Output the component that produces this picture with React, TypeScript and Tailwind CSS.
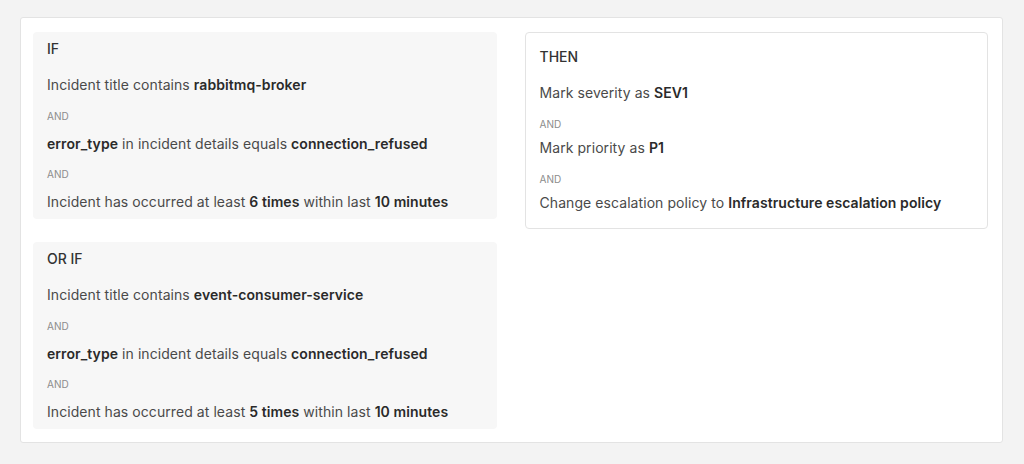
import React from 'react';

type Part = { t: string; b?: boolean };

const ifRules: Part[][] = [
  [{ t: 'Incident title contains ' }, { t: 'rabbitmq-broker', b: true }],
  [{ t: 'error_type', b: true }, { t: ' in incident details equals ' }, { t: 'connection_refused', b: true }],
  [{ t: 'Incident has occurred at least ' }, { t: '6 times', b: true }, { t: ' within last ' }, { t: '10 minutes', b: true }],
];

const orIfRules: Part[][] = [
  [{ t: 'Incident title contains ' }, { t: 'event-consumer-service', b: true }],
  [{ t: 'error_type', b: true }, { t: ' in incident details equals ' }, { t: 'connection_refused', b: true }],
  [{ t: 'Incident has occurred at least ' }, { t: '5 times', b: true }, { t: ' within last ' }, { t: '10 minutes', b: true }],
];

const thenRules: Part[][] = [
  [{ t: 'Mark severity as ' }, { t: 'SEV1', b: true }],
  [{ t: 'Mark priority as ' }, { t: 'P1', b: true }],
  [{ t: 'Change escalation policy to ' }, { t: 'Infrastructure escalation policy', b: true }],
];

const Line = ({ parts }: { parts: Part[] }) => (
  <div className="text-[14px] leading-[20px] tracking-[0.005em] text-[#4a4a4a] whitespace-nowrap">
    {parts.map((p, i) =>
      p.b ? (
        <span key={i} className="font-semibold text-[#2a2a2a]">{p.t}</span>
      ) : (
        <span key={i}>{p.t}</span>
      )
    )}
  </div>
);

const RuleList = ({ rules, andClass }: { rules: Part[][]; andClass: string }) => (
  <div className="flex flex-col">
    {rules.map((r, i) => (
      <React.Fragment key={i}>
        {i > 0 && (
          <div className={`text-[10px] leading-[14px] text-[#8c8c8c] ${andClass}`}>AND</div>
        )}
        <Line parts={r} />
      </React.Fragment>
    ))}
  </div>
);

const CondBox = ({ title, rules }: { title: string; rules: Part[][] }) => (
  <div className="bg-[#f7f7f7] rounded-[4px] px-[14px] pt-[7px] pb-[7px]">
    <div className="text-[14px] leading-[20px] font-medium text-[#333] mb-[16px]">{title}</div>
    <RuleList rules={rules} andClass="mt-[13.5px] mb-[11px]" />
  </div>
);

const App: React.FC = () => {
  return (
    <div className="min-h-screen bg-[#f3f3f3] pt-[17px] pl-[20px] pr-[21px] pb-[21px]" style={{ fontFamily: 'Inter, "Noto Sans", sans-serif' }}>
      <div className="bg-white border border-[#e3e3e3] rounded-[3px] pt-[14px] pb-[13px] pl-[12px] pr-[14px] grid grid-cols-2 gap-x-[28px] items-start">
        <div className="flex flex-col gap-[23px]">
          <CondBox title="IF" rules={ifRules} />
          <CondBox title="OR IF" rules={orIfRules} />
        </div>
        <div className="bg-white border border-[#e3e3e3] rounded-[4px] px-[14px] pt-[14px] pb-[15px]">
          <div className="text-[14px] leading-[20px] font-medium text-[#333] mb-[16px]">THEN</div>
          <RuleList rules={thenRules} andClass="mt-[14px] mb-[7px]" />
        </div>
      </div>
    </div>
  );
};

export default App;
